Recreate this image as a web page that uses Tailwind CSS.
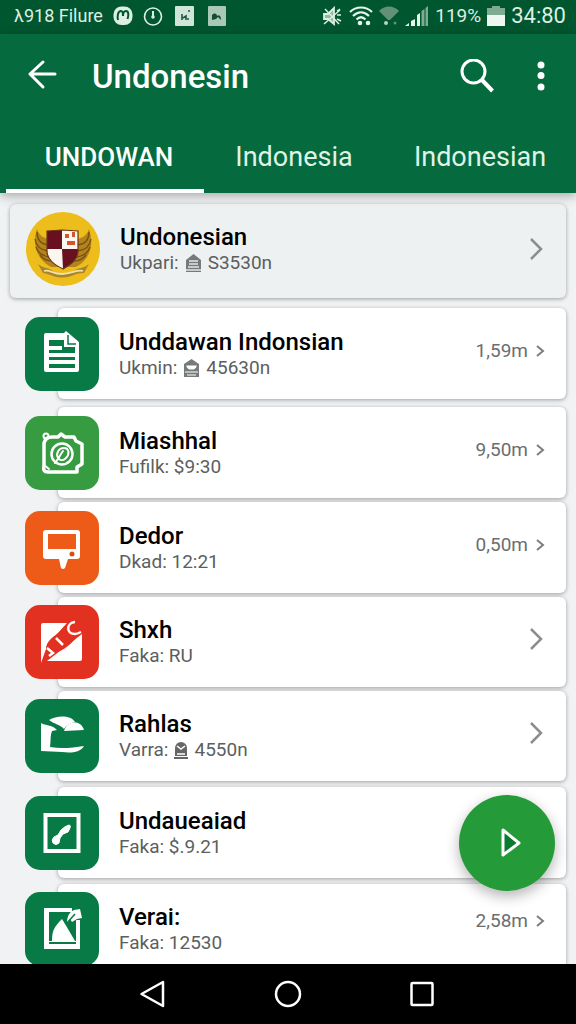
<!DOCTYPE html>
<html lang="id">
<head>
    <meta charset="UTF-8">
    <meta name="viewport" content="width=device-width, initial-scale=1.0">
    <title>Undonesin</title>
    <script src="https://cdn.jsdelivr.net/npm/@tailwindcss/browser@4"></script>
</head>
<body class="h-screen flex flex-col overflow-hidden bg-[#f0f2f3] font-['Roboto','Noto_Sans',sans-serif]">
    <!-- Status bar -->
    <div class="h-[34px] shrink-0 flex items-center justify-between pl-3.5 pr-2.5 pb-0.5 bg-[#00562f] text-[#dcefe2] text-[19px] leading-6">
        <div class="flex items-center gap-2.5">
            <span class="text-[18px]">λ918 Filure</span>
            <svg class="size-5" viewBox="0 0 20 20"><rect x="0.5" y="0.5" width="19" height="18.5" rx="8" fill="#dcefe2"/><path d="M5 14c-1-4 0-9 3-9 2 0 2 3 2 5 0-3 1-5 3-5 2.500 0 3 4 1.500 8" fill="none" stroke="#00562f" stroke-width="2"/></svg>
            <svg class="size-5" viewBox="0 0 20 20" fill="none" stroke="#dcefe2" stroke-width="1.600"><circle cx="10" cy="10.500" r="8.500"/><path d="M10 5v6" stroke-width="2"/><circle cx="10" cy="11" r="1" fill="#dcefe2"/></svg>
            <svg class="size-5 ml-0.5" viewBox="0 0 20 20"><rect width="19" height="20" rx="1" fill="#cfe5d8"/><path d="M7 8v6M8 12l3-2v4M12 13h2M13 5h2" fill="none" stroke="#1c5a3a" stroke-width="1.600"/></svg>
            <svg class="size-5 ml-0.5" viewBox="0 0 20 20"><rect x="1" width="18" height="20" rx="1" fill="#a9c9b6"/><path d="M5 14V9c3-3 5-1 5 1 3-2 4 1 4 4l-3-3-2 2z" fill="#124d2e"/></svg>
        </div>
        <div class="flex items-center gap-1.5">
            <svg class="size-5" viewBox="0 0 20 20" fill="none" stroke="#dcefe2" stroke-width="1.800"><path d="M1 8h4l6-6v16l-6-5H1z" fill="#8fb9a0"/><path d="M2 3l14 15M14 5l3-2M14 9h4M14 13l4 2M1 18l16-14" stroke-width="1.500"/></svg>
            <svg class="w-6 h-5" viewBox="0 0 24 20" fill="none" stroke="#e6f5eb" stroke-width="2.200"><path d="M1 6C7 0 17 0 23 6M4 10c5-5 11-5 16 0M7.500 13.500c3-3 6-3 9 0"/><circle cx="11" cy="17" r="1.200"/><circle cx="19" cy="17" r="1.200"/></svg>
            <svg class="w-5 h-5" viewBox="0 0 20 20"><path d="M0 5C5-1 15-1 20 5L11 14H9z" fill="#629177"/><circle cx="7" cy="17" r="2" fill="#b6d3c1"/><circle cx="16" cy="17" r="1.500" fill="#629177"/></svg>
            <svg class="w-6 h-5" viewBox="0 0 24 20" fill="#e6f5eb"><path d="M0 20l4-3v3zM6 15l4-2v7H6zM12 9l3-2v13h-3z"/><path d="M16.500 5l3-2v17h-3zM20.500 2l2.500-2v20h-2.500z" fill="#7fab91"/></svg>
            <span>119%</span>
            <svg class="w-[18px] h-5" viewBox="0 0 18 20"><path d="M5 0h8v2h5v9H0V2h5z" fill="#7fab91"/><path d="M0 9h18v11H0z" fill="#eef8f1"/></svg>
            <span class="text-[22px]">34:80</span>
        </div>
    </div>

    <!-- App bar and tabs -->
    <header class="relative z-10 shrink-0 bg-[#056b3e] text-white shadow-[0_3px_10px_rgba(0,0,0,0.3)]">
        <div class="h-[86px] flex items-center pl-6 pr-4">
            <button type="button" aria-label="Back">
                <svg class="size-9" viewBox="0 0 36 36" fill="none" stroke="currentColor" stroke-width="3" stroke-linecap="round" stroke-linejoin="round"><path d="M31 15H6M19 3L6 15l13 13"/></svg>
            </button>
            <h1 class="ml-8 flex-1 text-[33px] leading-10 font-medium">Undonesin</h1>
            <button type="button" aria-label="Search">
                <svg class="size-9" viewBox="0 0 36 36" fill="none" stroke="currentColor" stroke-width="3"><circle cx="13.500" cy="12.500" r="11.500"/><path d="M21.500 20.500L32.500 32" stroke-width="4"/></svg>
            </button>
            <button type="button" aria-label="More options" class="ml-7">
                <svg class="w-9 h-9" viewBox="0 0 36 36" fill="currentColor"><circle cx="17" cy="6" r="3.500"/><circle cx="17" cy="16.500" r="3.500"/><circle cx="17" cy="28" r="3.500"/></svg>
            </button>
        </div>
        <nav class="h-[73px] grid grid-cols-[198fr_180fr_192fr] pl-1.5 text-[27px] leading-8 text-[#dff3e6]">
            <button type="button" class="flex items-center justify-center pl-2 pt-1 border-b-4 border-white text-[26px] font-medium text-white">UNDOWAN</button>
            <button type="button" class="flex items-center justify-center pt-1 border-b-4 border-transparent">Indonesia</button>
            <button type="button" class="flex items-center justify-center pt-1 border-b-4 border-transparent">Indonesian</button>
        </nav>
    </header>

    <main class="relative flex-1 min-h-0">
        <ul class="h-full overflow-hidden px-2.5 pt-[11px]">
            <!-- Featured row -->
            <li>
                <a href="#" class="h-[94px] flex items-center pl-4 pr-5 pb-1 rounded-md bg-[#eef1f2] shadow-[0_1px_4px_rgba(0,0,0,0.35)]">
                    <svg class="size-[74px] shrink-0" viewBox="0 0 74 74">
                        <circle cx="37" cy="37" r="37" fill="#edbd1b"/>
                        <path d="M11 17c-5 15-1 30 14 38l25 0c15-8 18-23 13-38-2 6-6 9-12 10L23 27c-6-1-10-4-12-10z" fill="#b5831c"/>
                        <path d="M11 20c0 8 4 12 11 13M9 27c1 7 6 11 13 12M10 35c2 6 7 9 13 10M14 43c3 4 7 6 12 6M63 20c0 8-4 12-11 13M65 27c-1 7-6 11-13 12M64 35c-2 6-7 9-13 10M60 43c-3 4-7 6-12 6" fill="none" stroke="#77520f" stroke-width="1.300"/>
                        <path d="M12 52c6 5 10 3 15 7 7 4 14 4 21 0 5-4 9-2 15-7l-5 9c-5 0-8 1-13 3-6 2-12 2-18 0-5-2-6-2-10-3z" fill="#a88430"/>
                        <path d="M18 59c6-2 8 3 18 3s15-5 21-3" fill="none" stroke="#f1e2a4" stroke-width="1.800"/>
                        <path d="M21 19l15-1 16 1v20c0 9-8 14-15 18-8-4-16-9-16-18z" fill="#fbf6ef"/>
                        <path d="M21 19l15-1v19H21zM36 37h16v2c0 9-8 14-15 18z" fill="#69101f"/>
                        <path d="M39 22h4v4h-4zM46 20h3v5h-3zM41 29h8v4h-8z" fill="#d4552d"/>
                        <path d="M21 19l15-1 16 1v20c0 9-8 14-15 18-8-4-16-9-16-18z" fill="none" stroke="#6b3514" stroke-width="1.200"/>
                    </svg>
                    <div class="ml-5 flex-1">
                        <h2 class="text-[24px] leading-7 font-medium text-black">Undonesian</h2>
                        <p class="flex items-center gap-1.5 text-[19px] leading-6 text-[#5c5f60]">Ukpari:
                            <svg class="w-[17px] h-[18px]" viewBox="0 0 17 18"><path d="M1 6l7.500-6L16 6v12H1z" fill="#777a7b"/><path d="M4 7h9M4 10h9M3 13h11M1 16h15" stroke="#e4e7e8" stroke-width="1.300"/></svg>
                            S3530n</p>
                    </div>
                    <svg class="w-5 h-6" viewBox="0 0 20 24" fill="none" stroke="#8b8e8f" stroke-width="2.500"><path d="M5 2l10 10L5 22"/></svg>
                </a>
            </li>

            <li class="mt-2.5 ml-12">
                <a href="#" class="h-[91px] flex items-center pr-5 rounded-md bg-white shadow-[0_1px_4px_rgba(0,0,0,0.35)]">
                    <svg class="size-[74px] shrink-0 -ml-[33px]" viewBox="0 0 74 74">
                        <rect width="74" height="74" rx="15" fill="#087a45"/>
                        <path d="M21 16h18l2-2 13 11v28q0 2-2 2H21q-2 0-2-2V18q0-2 2-2zM24 23v28h26V30H39v-7z" fill="#fff" fill-rule="evenodd"/>
                        <path d="M24 31h13M24 38h26M24 45h26" stroke="#fff" stroke-width="4"/>
                        <path d="M43 18v9h8" fill="none" stroke="#087a45" stroke-width="1.500"/>
                    </svg>
                    <div class="ml-5 flex-1">
                        <h2 class="text-[24px] leading-7 font-medium text-black">Unddawan Indonsian</h2>
                        <p class="flex items-center gap-1.5 text-[19px] leading-6 text-[#5c5f60]">Ukmin:
                            <svg class="w-[17px] h-[18px]" viewBox="0 0 17 18"><path d="M1 5l7.500-5L16 5v13H1z" fill="#777a7b"/><path d="M4 7c1 4 8 4 9 0zM2 13h13M4 16h9" fill="#fff" stroke="#fff" stroke-width="1.200"/></svg>
                            45630n</p>
                    </div>
                    <span class="pb-1.5 text-[19px] leading-6 text-[#6b6e6f]">1,59m</span>
                    <svg class="ml-1.5 mb-1.5 w-3 h-3" viewBox="0 0 12 12" fill="none" stroke="#7b7e7f" stroke-width="2"><path d="M3 1l6 5-6 5"/></svg>
                </a>
            </li>

            <li class="mt-2 ml-12">
                <a href="#" class="h-[91px] flex items-center pr-5 rounded-md bg-white shadow-[0_1px_4px_rgba(0,0,0,0.35)]">
                    <svg class="size-[74px] shrink-0 -ml-[33px]" viewBox="0 0 74 74">
                        <rect width="74" height="74" rx="15" fill="#369b41"/>
                        <g fill="none" stroke="#fff" stroke-linecap="round" stroke-linejoin="round">
                            <path d="M19 27c1-4 4-6 8-6h6l3-3 4 3h9l2 4 6 3v20l-5 3v5H23c-4 0-5-2-4-7z" stroke-width="3.500"/>
                            <circle cx="21" cy="20" r="2.500" stroke-width="2"/>
                            <path d="M19 49l5 4" stroke-width="2"/>
                            <circle cx="37" cy="38" r="10.500" stroke-width="2.500"/>
                            <path d="M34 43c-4-4-1-11 5-11 5 0 6 6 2 10-2 2-5 3-7 1zM38 35c-3 4-4 7-8 12" stroke-width="2"/>
                        </g>
                    </svg>
                    <div class="ml-5 flex-1">
                        <h2 class="text-[24px] leading-7 font-medium text-black">Miashhal</h2>
                        <p class="text-[19px] leading-6 text-[#5c5f60]">Fufilk: $9:30</p>
                    </div>
                    <span class="pb-1.5 text-[19px] leading-6 text-[#6b6e6f]">9,50m</span>
                    <svg class="ml-1.5 mb-1.5 w-3 h-3" viewBox="0 0 12 12" fill="none" stroke="#7b7e7f" stroke-width="2"><path d="M3 1l6 5-6 5"/></svg>
                </a>
            </li>

            <li class="mt-1 ml-12">
                <a href="#" class="h-[91px] flex items-center pr-5 rounded-md bg-white shadow-[0_1px_4px_rgba(0,0,0,0.35)]">
                    <svg class="size-[74px] shrink-0 -ml-[33px]" viewBox="0 0 74 74">
                        <rect width="74" height="74" rx="15" fill="#ee5a17"/>
                        <path d="M21 19h31q3 0 3 3v23q0 3-3 3H43l-3 9q-2 2-4 0l-2-9H21q-3 0-3-3V22q0-3 3-3zM23 23v15h28V23z" fill="#fff" fill-rule="evenodd"/>
                        <circle cx="47" cy="43" r="2.500" fill="#d94f13"/>
                    </svg>
                    <div class="ml-5 flex-1">
                        <h2 class="text-[24px] leading-7 font-medium text-black">Dedor</h2>
                        <p class="text-[19px] leading-6 text-[#5c5f60]">Dkad: 12:21</p>
                    </div>
                    <span class="pb-1.5 text-[19px] leading-6 text-[#6b6e6f]">0,50m</span>
                    <svg class="ml-1.5 mb-1.5 w-3 h-3" viewBox="0 0 12 12" fill="none" stroke="#7b7e7f" stroke-width="2"><path d="M3 1l6 5-6 5"/></svg>
                </a>
            </li>

            <li class="mt-1 ml-12">
                <a href="#" class="h-[90px] flex items-center pr-5 rounded-md bg-white shadow-[0_1px_4px_rgba(0,0,0,0.35)]">
                    <svg class="size-[74px] shrink-0 -ml-[33px]" viewBox="0 0 74 74">
                        <rect width="74" height="74" rx="15" fill="#e23120"/>
                        <path d="M18 18h24L22 40l-1 9-5 9V20q0-2 2-2zM57 29v25q0 2-2 2H22z" fill="#fff"/>
                        <path d="M21 44c0-8 8-13 14-17l8-9 12 10c-6 8-11 13-18 17l-12 5-9 8z" fill="#e23120"/>
                        <path d="M50 17c-9 1-9 12 0 12 2 0 4-1 6-2M31 33l7 7M22 43l6 5-4 3" fill="none" stroke="#fff" stroke-width="2.500"/>
                    </svg>
                    <div class="ml-5 flex-1">
                        <h2 class="text-[24px] leading-7 font-medium text-black">Shxh</h2>
                        <p class="text-[19px] leading-6 text-[#5c5f60]">Faka: RU</p>
                    </div>
                    <svg class="w-5 h-6 mb-1.5" viewBox="0 0 20 24" fill="none" stroke="#8b8e8f" stroke-width="2.500"><path d="M5 2l10 10L5 22"/></svg>
                </a>
            </li>

            <li class="mt-1 ml-12">
                <a href="#" class="h-[90px] flex items-center pr-5 rounded-md bg-white shadow-[0_1px_4px_rgba(0,0,0,0.35)]">
                    <svg class="size-[74px] shrink-0 -ml-[33px]" viewBox="0 0 74 74">
                        <rect width="74" height="74" rx="15" fill="#087a45"/>
                        <path d="M24 21c8-5 22-5 26 2-5 1-8 3-11 7-5-5-10-5-15-9z" fill="#fff"/>
                        <path d="M39 32c4-12 17-11 20-1z" fill="#fff"/>
                        <path d="M16 24c5 3 10 1 16 7l-5 1c-2 5-1 10-2 16 11 2 22 1 34-1-4 7-14 7-22 6l-21-1z" fill="#fff"/>
                    </svg>
                    <div class="ml-5 flex-1">
                        <h2 class="text-[24px] leading-7 font-medium text-black">Rahlas</h2>
                        <p class="flex items-center gap-1.5 text-[19px] leading-6 text-[#5c5f60]">Varra:
                            <svg class="w-[14px] h-[17px]" viewBox="0 0 14 17"><circle cx="7" cy="6" r="6" fill="#666"/><path d="M1 7h12v7H1zM0 15h14v2H0z" fill="#666"/><path d="M3 4l4 3 4-3M3 12h8" fill="none" stroke="#fff" stroke-width="1.500"/></svg>
                            4550n</p>
                    </div>
                    <svg class="w-5 h-6 mb-1.5" viewBox="0 0 20 24" fill="none" stroke="#8b8e8f" stroke-width="2.500"><path d="M5 2l10 10L5 22"/></svg>
                </a>
            </li>

            <li class="mt-1.5 ml-12">
                <a href="#" class="h-[91px] flex items-center pr-5 rounded-md bg-white shadow-[0_1px_4px_rgba(0,0,0,0.35)]">
                    <svg class="size-[74px] shrink-0 -ml-[33px]" viewBox="0 0 74 74">
                        <rect width="74" height="74" rx="15" fill="#087a45"/>
                        <rect x="20.500" y="19" width="33" height="36" fill="none" stroke="#fff" stroke-width="4"/>
                        <path d="M44 29q2 0 1 3l-2 4-5 2-3 4-1 5q-3 3-6 0-2-3 1-6l4-2 3-5q4-4 8-5z" fill="#fff" stroke="#fff" stroke-linejoin="round"/>
                    </svg>
                    <div class="ml-5 flex-1">
                        <h2 class="text-[24px] leading-7 font-medium text-black">Undaueaiad</h2>
                        <p class="text-[19px] leading-6 text-[#5c5f60]">Faka: $.9.21</p>
                    </div>
                </a>
            </li>

            <li class="mt-1.5 ml-12">
                <a href="#" class="h-[90px] flex items-center pr-5 rounded-md bg-white shadow-[0_1px_4px_rgba(0,0,0,0.35)]">
                    <svg class="size-[74px] shrink-0 -ml-[33px]" viewBox="0 0 74 74">
                        <rect width="74" height="74" rx="15" fill="#087a45"/>
                        <path d="M19 16h28v4H24v29h27V28h4v29H19z" fill="#fff"/>
                        <path d="M27 49c0-10 2-14 10-22l6 10 7 12z" fill="#fff"/>
                        <path d="M42 31c0-6 2-11 7-13l6-1 2 9-5 1-5 3-2-3z" fill="#fff"/>
                        <path d="M24 51h27" stroke="#087a45" stroke-width="2"/>
                        <path d="M42 31l8-9" stroke="#087a45" stroke-width="1.500"/>
                    </svg>
                    <div class="ml-5 flex-1">
                        <h2 class="text-[24px] leading-7 font-medium text-black">Verai:</h2>
                        <p class="text-[19px] leading-6 text-[#5c5f60]">Faka: 12530</p>
                    </div>
                    <span class="pb-4 text-[19px] leading-6 text-[#6b6e6f]">2,58m</span>
                    <svg class="ml-1.5 mb-4 w-3 h-3" viewBox="0 0 12 12" fill="none" stroke="#7b7e7f" stroke-width="2"><path d="M3 1l6 5-6 5"/></svg>
                </a>
            </li>
        </ul>

        <!-- Floating play button -->
        <button type="button" aria-label="Play" class="absolute right-[21px] bottom-[73px] size-24 rounded-full bg-[#249a38] flex items-center justify-center shadow-[0_5px_14px_rgba(0,0,0,0.3)]">
            <svg class="w-7 h-8" viewBox="0 0 28 32"><path d="M10 3l16 13-16 12z" fill="#0a7a31" stroke="#fff" stroke-width="3" stroke-linejoin="round"/></svg>
        </button>
    </main>

    <!-- System navigation -->
    <nav class="h-[60px] shrink-0 flex items-center justify-center gap-[106px] bg-black">
        <button type="button" aria-label="Back">
            <svg class="size-7" viewBox="0 0 28 28" fill="none" stroke="#fff" stroke-width="2.500" stroke-linejoin="round"><path d="M23 2v24L1.500 14z"/></svg>
        </button>
        <button type="button" aria-label="Home">
            <svg class="size-7" viewBox="0 0 28 28" fill="none" stroke="#fff" stroke-width="2.500"><circle cx="14" cy="14" r="12"/></svg>
        </button>
        <button type="button" aria-label="Recent apps">
            <svg class="size-7" viewBox="0 0 28 28" fill="none" stroke="#fff" stroke-width="2.500"><rect x="3.500" y="3" width="21" height="22" rx="1"/></svg>
        </button>
    </nav>
</body>
</html>
